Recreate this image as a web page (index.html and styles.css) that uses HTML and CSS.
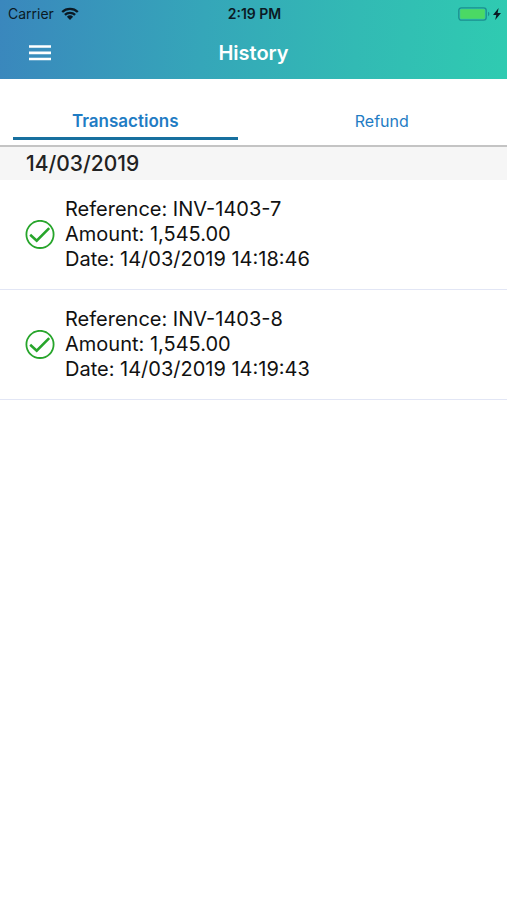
FILE: index.html
```html
<!DOCTYPE html>
<html lang="en">
<head>
<meta charset="utf-8">
<meta name="viewport" content="width=device-width, initial-scale=1">
<title>History</title>
<link rel="stylesheet" href="styles.css">
</head>
<body>
<header class="header">
  <div class="status">
    <div class="status-left">
      <span>Carrier</span>
      <svg class="wifi" viewBox="0 0 18 13" aria-hidden="true">
        <path d="M1.2 5a11.2 11.2 0 0 1 15.6 0M3.9 7.9a7.3 7.3 0 0 1 10.2 0" fill="none" stroke="currentColor" stroke-width="2.3"/>
        <path d="M9 13 5.9 9.8a4.5 4.5 0 0 1 6.2 0z" fill="currentColor"/>
      </svg>
    </div>
    <span class="clock">2:19 PM</span>
    <div class="status-right">
      <svg class="battery" viewBox="0 0 32 14" aria-hidden="true">
        <rect x=".8" y=".8" width="27.4" height="12.4" rx="2.6" fill="none" stroke="#1b8f8f" stroke-width="1.3"/>
        <rect x="2.2" y="2.2" width="24.6" height="9.6" rx="1" fill="#4bd964"/>
        <path d="M30 4.8a2.4 2.4 0 0 1 0 4.4z" fill="#1b8f8f"/>
      </svg>
      <svg class="bolt" viewBox="0 0 8 12" aria-hidden="true">
        <path d="M5.6 0 0 6.9h3.3L2.2 12 8 4.9H4.6z" fill="currentColor"/>
      </svg>
    </div>
  </div>
  <div class="nav">
    <button class="menu" type="button" aria-label="Menu">
      <svg class="menu-icon" viewBox="0 0 22 16" aria-hidden="true">
        <path d="M0 1.5h22M0 7.8h22M0 14h22" stroke="currentColor" stroke-width="2.7"/>
      </svg>
    </button>
    <h1 class="title">History</h1>
  </div>
</header>
<nav class="tabs">
  <a class="tab tab-active" href="#transactions" aria-current="page">Transactions</a>
  <a class="tab" href="#refund">Refund</a>
</nav>
<main id="transactions">
  <h2 class="day">14/03/2019</h2>
  <ul class="list">
    <li class="item">
      <svg class="check" viewBox="0 0 30 30" aria-hidden="true">
        <circle cx="15" cy="14.4" r="13.6"/>
        <path d="M5.2 14.8 11.7 20.6 24.2 8.2"/>
      </svg>
      <div class="details">
        <div>Reference: INV-1403-7</div>
        <div>Amount: 1,545.00</div>
        <div>Date: 14/03/2019 14:18:46</div>
      </div>
    </li>
    <li class="item">
      <svg class="check" viewBox="0 0 30 30" aria-hidden="true">
        <circle cx="15" cy="14.4" r="13.6"/>
        <path d="M5.2 14.8 11.7 20.6 24.2 8.2"/>
      </svg>
      <div class="details">
        <div>Reference: INV-1403-8</div>
        <div>Amount: 1,545.00</div>
        <div>Date: 14/03/2019 14:19:43</div>
      </div>
    </li>
  </ul>
</main>
</body>
</html>
```
FILE: styles.css
```css
* {
  box-sizing: border-box;
}

body {
  margin: 0;
  background: #fff;
  color: #111;
  font-family: Inter, "Liberation Sans", sans-serif;
}

.header {
  background: linear-gradient(94deg, #3a87bd 0%, #35a6b9 40%, #32bab4 70%, #2fcbb1 100%);
}

.status {
  display: grid;
  grid-template-columns: 1fr auto 1fr;
  align-items: center;
  height: 27px;
  padding: 0 6px 0 8px;
  color: #0b1a24;
  font-size: 14px;
}

.status-left,
.status-right {
  display: flex;
  align-items: center;
  gap: 7px;
}

.status-right {
  justify-content: flex-end;
  gap: 3px;
}

.wifi {
  width: 18px;
  height: 13px;
}

.clock {
  font-weight: 600;
}

.battery {
  width: 32px;
  height: 14px;
}

.bolt {
  width: 8px;
  height: 12px;
}

.nav {
  display: grid;
  grid-template-columns: 1fr auto 1fr;
  align-items: center;
  height: 52px;
  padding: 0 24px;
  color: #fff;
}

.menu {
  display: flex;
  justify-self: start;
  padding: 5px;
  border: 0;
  background: none;
  color: inherit;
}

.menu-icon {
  width: 22px;
  height: 16px;
}

.title {
  margin: 0;
  font-size: 20px;
  font-weight: 600;
}

.tabs {
  display: grid;
  grid-template-columns: 1fr 1fr;
  gap: 32px;
  padding: 29px 13px 5px;
  border-bottom: 2px solid #c4c4c4;
}

.tab {
  padding-bottom: 2px;
  border-bottom: 3px solid transparent;
  color: #1f7cc4;
  font-size: 16px;
  line-height: 27px;
  text-align: center;
  text-decoration: none;
}

.tab-active {
  border-bottom-color: #17709f;
  font-size: 17px;
  font-weight: 600;
}

.day {
  margin: 0;
  padding: 0 26px;
  background: #f6f6f6;
  color: #222;
  font-size: 21px;
  font-weight: 500;
  line-height: 33px;
}

.list {
  margin: 0;
  padding: 0;
  list-style: none;
}

.item {
  display: flex;
  align-items: center;
  gap: 10px;
  padding: 17px 25px;
  border-bottom: 1px solid #e2e6f5;
}

.check {
  flex: none;
  width: 30px;
  height: 30px;
  fill: none;
  stroke: #27a52b;
  stroke-width: 1.8;
}

.check path {
  stroke-width: 2.6;
}

.details {
  font-size: 20px;
  line-height: 25px;
}
```
